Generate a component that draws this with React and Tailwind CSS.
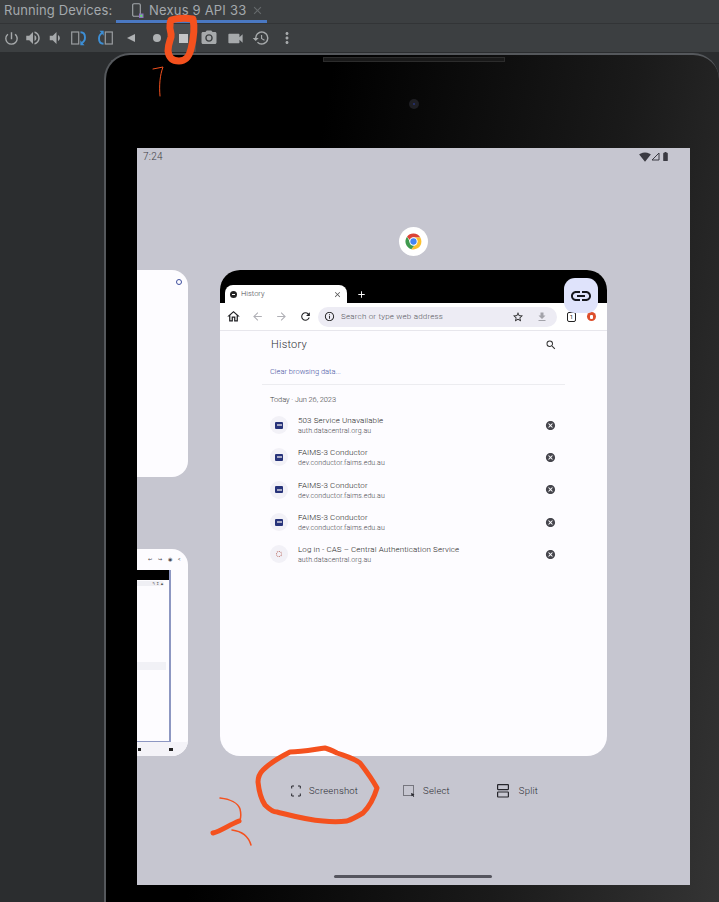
import React from 'react';
import {
  MdPowerSettingsNew, MdVolumeUp, MdVolumeDown, MdPhotoCamera, MdVideocam, MdRestore, MdMoreVert,
  MdOutlineHome, MdArrowBack, MdArrowForward, MdRefresh, MdInfoOutline, MdStarBorder, MdFileDownload,
  MdAdd, MdClose, MdLink, MdCancel, MdSearch, MdSignalWifi4Bar, MdBatteryStd,
} from 'react-icons/md';

const toolClass = 'flex items-center justify-center h-[28px] text-[#a6a9ab]';

function RotateIcon({ flip }) {
  return (
    <svg width="16" height="16" viewBox="0 0 16 16" fill="none" className={flip ? 'rotate-180' : ''}>
      <rect x="0.7" y="2" width="7" height="12" stroke="#9a9da0" strokeWidth="1.2" />
      <path d="M9.500 2.200c3 0 4.500 2.300 4.500 5.300 0 2.500-1.300 4.500-3.400 5.500" stroke="#3d8fd6" strokeWidth="1.900" />
      <path d="M9.300 10.200v5h4.200z" fill="#3d8fd6" />
    </svg>
  );
}

function Toolbar() {
  return (
    <div className="flex items-center h-[29px] bg-[#3c3f41] border-t border-[#323436]">
      <div className={`${toolClass} w-[22px]`}><MdPowerSettingsNew size={17} /></div>
      <div className={`${toolClass} w-[22px]`}><MdVolumeUp size={18} /></div>
      <div className={`${toolClass} w-[22px]`}><MdVolumeDown size={18} /></div>
      <div className={`${toolClass} w-[26px]`}><RotateIcon /></div>
      <div className={`${toolClass} w-[26px]`}><RotateIcon flip /></div>
      <div className={`${toolClass} w-[26px]`}>
        <svg width="10" height="10" viewBox="0 0 10 10"><path d="M9 1v8L1 5z" fill="#aeb1b3" /></svg>
      </div>
      <div className={`${toolClass} w-[26px]`}><div className="w-[8px] h-[8px] rounded-full bg-[#aeb1b3]" /></div>
      <div className={`${toolClass} w-[26px] bg-[#4c5052]`}><div className="w-[9px] h-[9px] bg-[#c4c6c8]" /></div>
      <div className={`${toolClass} w-[26px]`}><MdPhotoCamera size={18} /></div>
      <div className={`${toolClass} w-[26px]`}><MdVideocam size={19} /></div>
      <div className={`${toolClass} w-[26px]`}><MdRestore size={18} /></div>
      <div className={`${toolClass} w-[26px]`}><MdMoreVert size={18} /></div>
    </div>
  );
}

function TabBar() {
  return (
    <div className="flex h-[23px] bg-[#3c3f41] text-[13px] leading-[20px] text-[#a4a9ad] [font-family:Inter,sans-serif]">
      <span className="pl-[4px] w-[116px] tracking-[0.1px]">Running Devices:</span>
      <div className="flex items-start w-[151px] h-[23px] pl-[16px] border-b-[3px] border-[#4a78c2]">
        <svg width="12" height="16" viewBox="0 0 12 16" fill="none" className="mt-[3px]">
          <rect x="0.7" y="0.7" width="7.600" height="12.600" rx="1.200" stroke="#a4a9ad" strokeWidth="1.100" />
          <rect x="7" y="10.500" width="4.500" height="4.500" fill="#8c6fc0" />
          <rect x="8.200" y="11.700" width="2.200" height="2.200" fill="#5fdc6a" />
        </svg>
        <span className="ml-[5px] tracking-[0.2px]">Nexus 9 API 33</span>
        <MdClose size={13} className="ml-[5px] mt-[4px] text-[#666a6d]" />
      </div>
    </div>
  );
}

function ChromeLogo() {
  return (
    <div className="flex items-center justify-center w-[29px] h-[29px] rounded-full bg-white">
      <svg width="19" height="19" viewBox="0 0 48 48">
        <path d="M24 4a20 20 0 0 1 17.300 10H24a10 10 0 0 0-9.200 6L7.600 12A20 20 0 0 1 24 4z" fill="#db4437" />
        <path d="M7.600 12l8.700 15a10 10 0 0 0 11 6.500L18.600 43.300A20 20 0 0 1 7.600 12z" fill="#3f9a4e" />
        <path d="M41.300 14A20 20 0 0 1 24 44h-5.400l8.700-10.500A10 10 0 0 0 32 20l-8-6z" fill="#fbc02d" />
        <circle cx="24" cy="24" r="10.500" fill="#fff" />
        <circle cx="24" cy="24" r="8" fill="#4285f4" />
      </svg>
    </div>
  );
}

function BrowserChrome() {
  return (
    <>
      <div className="flex items-end h-[33px] bg-black pl-[5px]">
        <div className="flex items-center w-[122px] h-[18px] bg-white rounded-t-[8px] pl-[5px] pr-[5px] text-[7.5px] text-[#45464c]">
          <div className="flex items-center justify-center w-[7px] h-[7px] rounded-full bg-[#222]">
            <div className="w-[3px] h-[1px] bg-white" />
          </div>
          <span className="ml-[4px] flex-1 pb-[1px] font-light">History</span>
          <MdClose size={9} className="text-[#555]" />
        </div>
        <MdAdd size={11} className="ml-[9px] mb-[3px] text-white" />
      </div>
      <div className="flex items-center h-[28px] bg-white border-b border-[#e7e6ec] pl-[6px] text-[#202124]">
        <MdOutlineHome size={15} />
        <MdArrowBack size={13} className="ml-[10px] text-[#b0b0b6]" />
        <MdArrowForward size={13} className="ml-[11px] text-[#b0b0b6]" />
        <MdRefresh size={13} className="ml-[11px]" />
        <div className="flex items-center w-[239px] h-[20px] ml-[6px] pl-[6px] pr-[8px] rounded-full bg-[#edecf4] text-[8px] tracking-[0.2px] text-[#55565c]">
          <MdInfoOutline size={11} className="text-[#222]" />
          <span className="ml-[6px] flex-1 font-light">Search or type web address</span>
          <MdStarBorder size={12} className="text-[#222]" />
          <MdFileDownload size={12} className="ml-[12px] mr-[1px] text-[#a3a3aa]" />
        </div>
        <div className="flex items-center justify-center w-[9px] h-[10px] ml-[10px] border border-[#222] rounded-[2px] text-[6px] leading-none">1</div>
        <div className="flex items-center justify-center w-[9px] h-[9px] ml-[11px] rounded-full bg-[#dd4f2c]">
          <div className="w-[3px] h-[4px] rounded-[1px] bg-white" />
        </div>
      </div>
    </>
  );
}

const historyRows = [
  ['503 Service Unavailable', 'auth.datacentral.org.au', false],
  ['FAIMS-3 Conductor', 'dev.conductor.faims.edu.au', false],
  ['FAIMS-3 Conductor', 'dev.conductor.faims.edu.au', false],
  ['FAIMS-3 Conductor', 'dev.conductor.faims.edu.au', false],
  ['Log in - CAS – Central Authentication Service', 'auth.datacentral.org.au', true],
];

function HistoryRow({ title, url, cas }) {
  return (
    <div className="flex items-center h-[32.3px] pl-[50px] pr-[51px]">
      <div className="flex items-center justify-center w-[18px] h-[18px] rounded-full bg-[#f2f1f7]">
        {cas ? (
          <div className="w-[6px] h-[6px] rounded-full border border-dotted border-[#b9685e]" />
        ) : (
          <div className="flex items-center justify-center w-[8px] h-[7px] rounded-[1px] bg-[#27337a]">
            <div className="w-[5px] h-[2px] bg-[#a8aac6]" />
          </div>
        )}
      </div>
      <div className="flex-1 ml-[10px] pt-[2px] leading-[10px] tracking-[0.1px] font-light">
        <div className="text-[8px] text-[#1f1f25]">{title}</div>
        <div className="text-[7px] text-[#45454c]">{url}</div>
      </div>
      <MdCancel size={11} className="text-[#46464d]" />
    </div>
  );
}

function MainCard() {
  return (
    <div className="relative w-[387px] h-full rounded-[20px] overflow-hidden bg-[#fdfcff]">
      <BrowserChrome />
      <div className="flex items-center justify-between h-[27px] pt-[1px] pl-[51px] pr-[50px] text-[#303036]">
        <span className="text-[11px] tracking-[0.2px] font-light">History</span>
        <MdSearch size={12} className="text-[#333]" />
      </div>
      <div className="pt-[9px] pl-[50px] text-[7.5px] leading-[10px] font-light text-[#3f4f9e]">Clear browsing data...</div>
      <div className="mt-[7px] mx-[42px] border-t border-[#ececf0]" />
      <div className="mt-[10px] mb-[4px] pl-[50px] text-[7.5px] leading-[10px] tracking-[-0.1px] font-light text-[#3c3c43]">Today · Jun 26, 2023</div>
      {historyRows.map(([title, url, cas], i) => (
        <HistoryRow key={i} title={title} url={url} cas={cas} />
      ))}
      <div className="absolute top-[8px] left-[344px] flex items-center justify-center w-[34px] h-[35px] rounded-[11px] bg-[#dfe3fb]">
        <MdLink size={24} className="text-[#16171d]" />
      </div>
    </div>
  );
}

function SideCards() {
  return (
    <div className="flex flex-col justify-between w-[51px] h-full">
      <div className="relative h-[207px] rounded-r-[16px] bg-[#fdfcff]">
        <div className="absolute top-[9px] left-[39px] w-[6px] h-[6px] rounded-full border border-[#3f4f9e]" />
      </div>
      <div className="flex flex-col h-[207px] rounded-r-[16px] overflow-hidden bg-[#fdfcff]">
        <div className="flex items-center gap-[6px] h-[21px] pl-[11px] text-[#44444a] text-[5px]">
          <span>↩</span><span>↪</span><span>◉</span><span>&lt;</span>
        </div>
        <div className="flex flex-col w-[34px] h-[172px] border-r-[2px] border-b border-[#8d97c2]">
          <div className="h-[10px] bg-black" />
          <div className="h-[5px] mt-[1px] mr-[5px] rounded-r-full bg-[#efeff4] text-[4px] leading-[5px] text-right text-[#555]">↰ ↧ ▲</div>
          <div className="h-[8px] mt-[76px] mr-[3px] bg-[#f1f1f6]" />
        </div>
        <div className="flex flex-1 items-center justify-between pl-[1px] pr-[15px] bg-[#f4f3f8]">
          <div className="w-[3px] h-[3px] bg-[#222]" />
          <div className="w-[4px] h-[3px] bg-[#222]" />
        </div>
      </div>
    </div>
  );
}

function Action({ icon, label, gap }) {
  return (
    <div className={`flex items-center ${gap}`}>
      {icon}
      <span className="text-[9.5px] tracking-[0.2px] font-light text-[#2a2a31]">{label}</span>
    </div>
  );
}

function Screen() {
  return (
    <div className="flex flex-col w-[553px] h-[737px] bg-[#c6c6d0] [font-family:Roboto,sans-serif]">
      <div className="flex items-center justify-between h-[17px] pl-[6px] pr-[19px] text-[10px] text-[#3f4046]">
        <span className="tracking-[0.3px] font-light">7:24</span>
        <div className="flex items-center text-[#3a3a42]">
          <MdSignalWifi4Bar size={12} />
          <svg width="9" height="9" viewBox="0 0 9 9"><path d="M8 1v7H1z" fill="none" stroke="#3a3a42" strokeWidth="1" /></svg>
          <MdBatteryStd size={11} />
        </div>
      </div>
      <div className="flex justify-center mt-[62px]"><ChromeLogo /></div>
      <div className="flex gap-[32px] h-[486px] mt-[14px]">
        <SideCards />
        <MainCard />
      </div>
      <div className="flex h-[119px] pt-[28px]">
        <div className="ml-[154px]">
          <Action
            gap="gap-[8px]"
            label="Screenshot"
            icon={
              <svg width="10" height="12" viewBox="0 0 10 12" fill="none" stroke="#26262c" strokeWidth="1">
                <path d="M3 1H.7v2.500M7 1h2.300v2.500M3 11H.7V8.500M7 11h2.300V8.500" />
              </svg>
            }
          />
        </div>
        <div className="ml-[45px]">
          <Action
            gap="gap-[8px]"
            label="Select"
            icon={
              <svg width="12" height="12" viewBox="0 0 12 12" fill="none">
                <rect x="0.5" y="0.5" width="10" height="10" stroke="#26262c" strokeDasharray="1 1" />
                <path d="M8 8l3.500 1.300-1.200.8.900 1.400-.8.400-.8-1.400-1 .8z" fill="#26262c" />
              </svg>
            }
          />
        </div>
        <div className="ml-[47px]">
          <Action
            gap="gap-[10px]"
            label="Split"
            icon={
              <svg width="12" height="14" viewBox="0 0 12 14" fill="none" stroke="#26262c" strokeWidth="1.200">
                <rect x="0.6" y="0.6" width="10.800" height="5" rx="0.5" />
                <rect x="0.6" y="8" width="10.800" height="5" rx="0.5" />
              </svg>
            }
          />
        </div>
      </div>
      <div className="h-[3px] w-[158px] ml-[197px] rounded-full bg-[#55555e]" />
    </div>
  );
}

function Tablet() {
  return (
    <div className="flex-1 ml-[104px] mt-[1px] rounded-t-[26px] border-t-[2px] border-l-[2px] border-[#55585c] bg-[linear-gradient(100deg,#000_30%,#1a1a1a_70%,#343434_100%)] overflow-hidden">
      <div className="flex flex-col items-center w-[553px] ml-[31px]">
        <div className="w-[182px] h-[5px] mt-[2px] bg-[#191919] border border-[#2c2c2c]" />
        <div className="flex items-center justify-center w-[10px] h-[10px] mt-[37px] rounded-full bg-[#1f1f24]">
          <div className="w-[2px] h-[2px] rounded-full bg-[#27337a]" />
        </div>
        <div className="mt-[39px]"><Screen /></div>
      </div>
    </div>
  );
}

// hand-drawn red annotations that sit on top of the whole screenshot
function Annotations() {
  return (
    <svg className="absolute inset-0 pointer-events-none" width="719" height="902" viewBox="0 0 719 902" fill="none" strokeLinecap="round" strokeLinejoin="round">
      <path d="M171 20c7-2 15-2 22-1 2 9 0 22-2 30-2 8-5 12-12 12-7 0-10-3-11-10 0-7 2-10 3-14 1-5-2-7-1-11 0-2 0-4 1-6z" stroke="#f4511e" strokeWidth="7" />
      <path d="M153 69l10-2c-3 8-4 18-3 29" stroke="#f4511e" strokeWidth="1" />
      <path d="M325 748c-14 2-24 4-35 4-12 6-20 11-27 18-4 4-5 8-5 12 1 10 3 17 7 23 4 4 8 7 12 7 16 4 30 8 46 9 8 1 17 1 24 0 6-2 11-5 16-8 6-6 11-15 14-25-5-9-10-16-17-25-7-5-15-7-23-10-4-2-8-4-12-5z" stroke="#f4511e" strokeWidth="5" />
      <path d="M220 798c10 1 18 5 20 11 1 4 1 8 0 11" stroke="#f4511e" strokeWidth="1.500" />
      <path d="M213 833c8-2 16-8 26-12" stroke="#f4511e" strokeWidth="5" />
      <path d="M232 830c8 1 16 5 19 15" stroke="#f4511e" strokeWidth="1.500" />
    </svg>
  );
}

export default function App() {
  return (
    <div className="relative flex flex-col w-[719px] h-[902px] overflow-hidden bg-[#2b2d2f]">
      <TabBar />
      <Toolbar />
      <Tablet />
      <Annotations />
    </div>
  );
}
